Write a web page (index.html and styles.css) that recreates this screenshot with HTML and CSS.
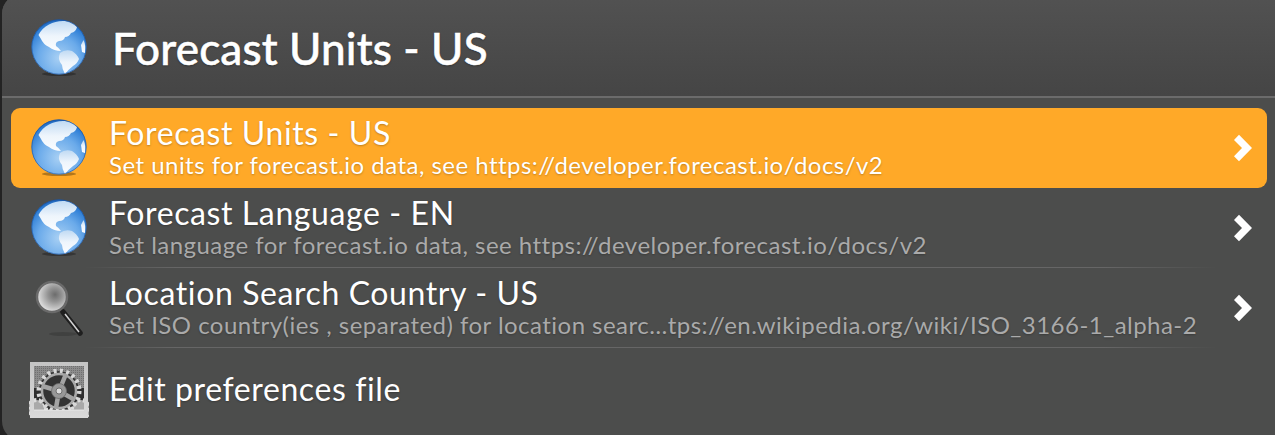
FILE: index.html
```html
<html>
  <head>
    <title>Forecast Units</title>
    <link rel="stylesheet" href="styles.css">
  </head>
  <body>
    <svg class="defs" width="0" height="0">
      <defs>
        <radialGradient id="sea" cx="50%" cy="70%" r="70%">
          <stop offset="0" stop-color="#a8d0f4"/>
          <stop offset="0.55" stop-color="#6aaaea"/>
          <stop offset="0.88" stop-color="#2f7fd6"/>
          <stop offset="1" stop-color="#1c5fb4"/>
        </radialGradient>
        <linearGradient id="land" x1="0" y1="0" x2="0" y2="1">
          <stop offset="0" stop-color="#c0daf3"/>
          <stop offset="0.5" stop-color="#eef5fc"/>
          <stop offset="1" stop-color="#fbfdff"/>
        </linearGradient>
        <filter id="soft">
          <feGaussianBlur stdDeviation="0.3"/>
        </filter>
        <radialGradient id="lens" cx="60%" cy="42%" r="58%">
          <stop offset="0" stop-color="#6c6c6c"/>
          <stop offset="0.4" stop-color="#939393"/>
          <stop offset="1" stop-color="#dedede"/>
        </radialGradient>
        <linearGradient id="frame" x1="0" y1="0" x2="0" y2="1">
          <stop offset="0" stop-color="#c4c4c4"/>
          <stop offset="1" stop-color="#dadada"/>
        </linearGradient>
        <pattern id="dots" width="2" height="2" patternUnits="userSpaceOnUse">
          <rect width="2" height="2" fill="#8c8c8c"/>
          <rect width="1" height="1" fill="#6f6f6f"/>
        </pattern>
        <symbol id="globe" viewBox="0 0 60 60">
          <ellipse cx="30" cy="56" rx="17" ry="2" fill="#000" opacity="0.3"/>
          <circle cx="30" cy="29" r="27.500" fill="url(#sea)"/>
          <g filter="url(#soft)">
            <path fill="url(#land)" d="M9.500 17 Q13 10 20 6.500 Q27 2.500 36 3 Q44 4 48 9 Q47 14 42 15 Q40 19 36 19 Q35 23 30 23 Q26 24 27 28 Q30 30 32 33 Q25 33 20 29 Q14 26 12 21 Z"/>
            <path fill="url(#land)" d="M31 35 Q36 31 43 33 Q48 36 50 41 Q48 46 44 48 Q40 51 36 56 Q33 51 33 47 Q28 41 31 35 Z"/>
            <path fill="url(#land)" d="M54.500 22 Q57 27 56 35 L53 34 L52 27 Z"/>
          </g>
          <circle cx="30" cy="29" r="27.200" fill="none" stroke="#174f9c" stroke-width="0.600"/>
        </symbol>
        <symbol id="loupe" viewBox="0 0 60 60">
          <ellipse cx="34" cy="56" rx="14" ry="2" fill="#000" opacity="0.15"/>
          <line x1="34" y1="34" x2="51" y2="55" stroke="#1f1f1f" stroke-width="5.500" stroke-linecap="round"/>
          <line x1="36" y1="36" x2="50" y2="54" stroke="#d4d4d4" stroke-width="1.500"/>
          <circle cx="23" cy="19" r="15" fill="url(#lens)" stroke="#6a6a6a" stroke-width="2.500"/>
        </symbol>
        <symbol id="gears" viewBox="0 0 60 60">
          <rect x="1" y="4" width="58" height="56" fill="#2e2e2e"/>
          <rect x="1" y="4" width="58" height="26" fill="url(#dots)"/>
          <circle cx="8" cy="51" r="9" fill="#a9a9a9" stroke="#dcdcdc" stroke-width="4" stroke-dasharray="3 2.500"/>
          <circle cx="52" cy="51" r="9" fill="#a9a9a9" stroke="#dcdcdc" stroke-width="4" stroke-dasharray="3 2.500"/>
          <circle cx="30" cy="33" r="20" fill="#333" stroke="#d8d8d8" stroke-width="5" stroke-dasharray="3 3.300"/>
          <circle cx="30" cy="33" r="17" fill="none" stroke="#a9a9a9" stroke-width="2.500"/>
          <path d="M30 33 L37 16 M30 33 L13 28 M30 33 L27 50 M30 33 L46 42" stroke="#a3a3a3" stroke-width="4.500"/>
          <circle cx="30" cy="33" r="7.500" fill="#989898" stroke="#6c6c6c" stroke-width="0.800"/>
          <circle cx="30" cy="33" r="3" fill="#dcdcdc" stroke="#5c5c5c" stroke-width="0.800"/>
          <path fill="url(#frame)" fill-rule="evenodd" d="M1 4 H59 V60 H1 Z M5 8 V52 H55 V8 Z"/>
          <path fill="none" stroke="#eee" stroke-width="0.800" d="M5 52 H55"/>
        </symbol>
        <symbol id="chevron" viewBox="0 0 18 28">
          <path d="M0 6 L5 0.800 L18 14 L5 27.200 L0 22.200 L8 14 Z" fill="currentColor"/>
        </symbol>
      </defs>
    </svg>

    <div class="window">
      <div class="header">
        <svg class="icon"><use href="#globe"/></svg>
        <span class="query">Forecast Units - US</span>
      </div>

      <div class="list">
        <div class="row selected">
          <svg class="icon"><use href="#globe"/></svg>
          <div class="text">
            <div class="title">Forecast Units - US</div>
            <div class="sub">Set units for forecast.io data, see https://developer.forecast.io/docs/v2</div>
          </div>
          <svg class="arrow"><use href="#chevron"/></svg>
        </div>

        <div class="row">
          <svg class="icon"><use href="#globe"/></svg>
          <div class="text">
            <div class="title">Forecast Language - EN</div>
            <div class="sub">Set language for forecast.io data, see https://developer.forecast.io/docs/v2</div>
          </div>
          <svg class="arrow"><use href="#chevron"/></svg>
        </div>

        <div class="row">
          <svg class="icon"><use href="#loupe"/></svg>
          <div class="text">
            <div class="title">Location Search Country - US</div>
            <div class="sub">Set ISO country(ies , separated) for location searc…tps://en.wikipedia.org/wiki/ISO_3166-1_alpha-2</div>
          </div>
          <svg class="arrow"><use href="#chevron"/></svg>
        </div>

        <div class="row last">
          <svg class="icon"><use href="#gears"/></svg>
          <div class="text">
            <div class="title">Edit preferences file</div>
          </div>
        </div>
      </div>
    </div>
  </body>
</html>
```
FILE: styles.css
```css
html, body {
  margin: 0;
  height: 100%;
  overflow: hidden;
  background: #232323;
}

body {
  font-family: Lato, "Open Sans", sans-serif;
  color: #fff;
}

.defs {
  display: block;
  height: 0;
}

/* window is a bit bigger than the shot, only part of its corners show */
.window {
  height: 447px;
  box-sizing: border-box;
  background: #4c4d4c;
  border-radius: 20px;
  margin: -6px -6px 0 2px;
  overflow: hidden;
}

/* ----------------------------------- Header */
.header {
  height: 104px;
  box-sizing: border-box;
  display: flex;
  align-items: center;
  padding: 6px 0 0 27px;
  background: linear-gradient(#525252, #454545);
  border-bottom: 2px solid #6b6b6b;
}

.query {
  font-size: 44px;
  font-weight: 500;
  letter-spacing: 0.15px;
  margin-left: 23px;
  -webkit-text-stroke: 0.5px #fff;
  text-shadow: 0 1px 2px rgba(0, 0, 0, 0.4);
}

.icon {
  width: 60px;
  height: 60px;
  flex: none;
}

/* ----------------------------------- Rows */
.list {
  padding: 10px 14px 0 9px;
}

.row {
  height: 80px;
  position: relative;
  display: flex;
  align-items: center;
  padding-left: 18px;
  border-radius: 9px;
}

.row::after {
  content: "";
  position: absolute;
  left: 74px;
  right: 50px;
  bottom: 0;
  height: 1px;
  background: linear-gradient(90deg, transparent, #666 8%, #666 90%, transparent);
}

.row.selected::after,
.row.last::after {
  display: none;
}

.row.selected {
  background: #ffa928;
}

.text {
  margin-left: 20px;
  padding-bottom: 6px;
  flex: 1;
  text-shadow: 0 1px 2px rgba(0, 0, 0, 0.25);
}

.row.last .text {
  padding: 2px 0 0;
}

.title {
  font-size: 32px;
  line-height: 40px;
  letter-spacing: 0.6px;
}

.sub {
  font-size: 24px;
  line-height: 24px;
  color: #aaa;
  letter-spacing: 0.47px;
}

.selected .sub {
  color: #fff;
}

.arrow {
  width: 18px;
  height: 28px;
  flex: none;
  margin-right: 15px;
  color: #fff;
}
```
